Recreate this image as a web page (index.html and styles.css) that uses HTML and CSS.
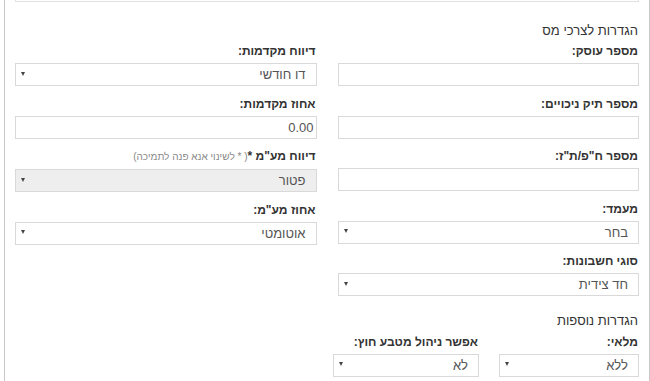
FILE: index.html
```html
<!DOCTYPE html>
<html lang="he" dir="rtl">
<head>
  <meta charset="UTF-8" />
  <meta name="viewport" content="width=device-width, initial-scale=1.0"/>
  <title>הגדרות עסק</title>
  <link rel="stylesheet" href="styles.css">
</head>
<body>
  <div class="panel">
    <div class="box top-box"></div>

    <h3 class="section-title">הגדרות לצרכי מס</h3>

    <div class="cols">
      <div class="col">
        <div class="field">
          <label>מספר עוסק:</label>
          <div class="box"></div>
        </div>
        <div class="field">
          <label>מספר תיק ניכויים:</label>
          <div class="box"></div>
        </div>
        <div class="field">
          <label>מספר ח"פ/ת"ז:</label>
          <div class="box"></div>
        </div>
        <div class="field">
          <label>מעמד:</label>
          <div class="box select"><span>בחר</span><i class="arrow"></i></div>
        </div>
        <div class="field">
          <label>סוגי חשבונות:</label>
          <div class="box select"><span>חד צידית</span><i class="arrow"></i></div>
        </div>
      </div>

      <div class="col">
        <div class="field">
          <label>דיווח מקדמות:</label>
          <div class="box select"><span>דו חודשי</span><i class="arrow"></i></div>
        </div>
        <div class="field">
          <label>אחוז מקדמות:</label>
          <div class="box number">0.00</div>
        </div>
        <div class="field">
          <label>דיווח מע"מ *<small class="note">( * לשינוי אנא פנה לתמיכה)</small></label>
          <div class="box select disabled"><span>פטור</span><i class="arrow"></i></div>
        </div>
        <div class="field">
          <label>אחוז מע"מ:</label>
          <div class="box select"><span>אוטומטי</span><i class="arrow"></i></div>
        </div>
      </div>
    </div>

    <h3 class="section-title more">הגדרות נוספות</h3>

    <div class="row-small">
      <div class="field stock">
        <label>מלאי:</label>
        <div class="box select"><span>ללא</span><i class="arrow"></i></div>
      </div>
      <div class="field currency">
        <label>אפשר ניהול מטבע חוץ:</label>
        <div class="box select"><span>לא</span><i class="arrow"></i></div>
      </div>
    </div>
  </div>
</body>
</html>
```

FILE: styles.css
```css
body {
  margin: 0;
  font-family: 'Liberation Sans', Arial, sans-serif;
  background: #fff;
  color: #333;
}

.panel {
  margin-left: 2px;
  width: 646px;
  height: 381px;
  box-sizing: border-box;
  border-left: 1px solid #c8c8c8;
  border-right: 1px solid #c8c8c8;
  padding: 0 10px;
  overflow: hidden;
}

.box {
  height: 23px;
  box-sizing: border-box;
  border: 1px solid #d9d9d9;
  background: #fff;
  font-size: 13px;
  color: #555;
}

.top-box {
  margin-top: -21px;
  border-color: #e2e2e2;
}

.section-title {
  margin: 20px 1px 3px 0;
  font-size: 13px;
  font-weight: normal;
  line-height: 18px;
  color: #333;
}

.section-title.more {
  margin-top: 6px;
  margin-bottom: 4px;
}

.cols {
  display: grid;
  grid-template-columns: 1fr 1fr;
  column-gap: 21px;
}

.field {
  margin-bottom: 9.5px;
}

.field label {
  display: block;
  padding-right: 1px;
  margin-bottom: 4px;
  font-size: 12px;
  font-weight: bold;
  line-height: 16px;
  color: #333;
}

.note {
  font-size: 10px;
  font-weight: normal;
  color: #888;
}

.select {
  display: flex;
  align-items: center;
  justify-content: space-between;
  padding: 0 10px 0 5px;
  line-height: 21px;
}

.select.disabled {
  background: #eee;
}

.arrow {
  width: 0;
  height: 0;
  border-top: 4px solid #444;
  border-left: 2.5px solid transparent;
  border-right: 2.5px solid transparent;
  margin-top: -2px;
}

.number {
  padding: 0 2px;
  line-height: 22px;
  text-align: right;
}

.row-small {
  display: flex;
  gap: 20px;
}

.stock {
  width: 140px;
}

.currency {
  width: 146px;
}
```
